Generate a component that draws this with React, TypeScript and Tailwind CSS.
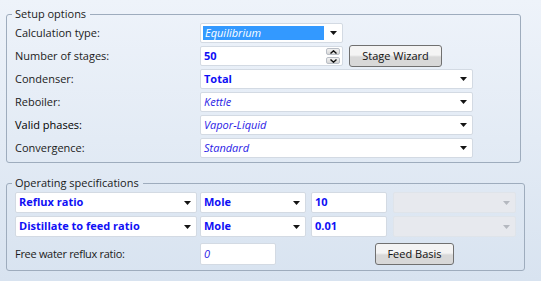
import type { ReactNode } from "react";

const font = { fontFamily: '"Open Sans", "Noto Sans", sans-serif' };

function Arrow({ disabled }: { disabled?: boolean }) {
  return (
    <svg width="7" height="4" viewBox="0 0 7 4" className="shrink-0">
      <path d="M0 0 H7 L3.5 4 Z" fill={disabled ? "#b4b8bf" : "#141414"} />
    </svg>
  );
}

function Select({
  value,
  width,
  bold,
  highlight,
  disabled,
}: {
  value?: string;
  width: string;
  bold?: boolean;
  highlight?: boolean;
  disabled?: boolean;
}) {
  return (
    <div
      className={`${width} h-full shrink-0 flex items-center rounded-[2px] border ${
        disabled ? "bg-[#e7e9ee] border-[#dfe4ea]" : "bg-white border-[#d3dae3]"
      } pr-[5px]`}
    >
      {highlight ? (
        <div className="flex-1 ml-[2px] mr-[6px] h-[14px] bg-[#3399ff] flex items-center pl-[2px]">
          <span className="italic text-white">{value}</span>
        </div>
      ) : (
        <span
          className={`flex-1 pl-[3px] truncate ${
            bold ? "font-bold text-[#1010f5]" : "italic text-[#2a22e6]"
          }`}
        >
          {value}
        </span>
      )}
      <Arrow disabled={disabled} />
    </div>
  );
}

function TextBox({ value, width, bold }: { value: string; width: string; bold?: boolean }) {
  return (
    <div
      className={`${width} h-full shrink-0 flex items-center rounded-[2px] border border-[#d3dae3] bg-white pl-[3px]`}
    >
      <span className={bold ? "font-bold text-[#1010f5]" : "italic text-[#2a22e6]"}>{value}</span>
    </div>
  );
}

function Button({ label, width }: { label: string; width: string }) {
  return (
    <div
      className={`${width} h-[22px] shrink-0 flex items-center justify-center rounded-[3px] border border-[#707070] bg-linear-to-b from-[#f4f4f4] from-45% to-[#d8d8d8] to-55% text-[#111]`}
    >
      {label}
    </div>
  );
}

function Spinner() {
  return (
    <div className="flex flex-col gap-[2px] mr-[1px]">
      {[0, 1].map((i) => (
        <div
          key={i}
          className="w-[14px] h-[7px] rounded-[2px] border border-[#b9bec6] bg-linear-to-b from-[#f2f2f2] to-[#d6d6d6] flex items-center justify-center"
        >
          <svg width="7" height="4" viewBox="0 0 7 4">
            <path
              d={i === 0 ? "M0.5 3.5 L3.5 0.8 L6.5 3.5" : "M0.5 0.5 L3.5 3.2 L6.5 0.5"}
              fill="none"
              stroke="#111"
              strokeWidth="1.4"
            />
          </svg>
        </div>
      ))}
    </div>
  );
}

function Row({ label, children, labelClass }: { label: string; children: ReactNode; labelClass?: string }) {
  return (
    <div className="flex items-center h-5">
      <div className={`w-[185px] shrink-0 ${labelClass ?? "text-[#1b1b1b]"}`}>{label}</div>
      {children}
    </div>
  );
}

function Group({ title, children, className }: { title: string; children: ReactNode; className?: string }) {
  return (
    <fieldset
      className={`ml-[6px] w-[515px] rounded-[3px] border border-[#9eacbd] px-[5px] ${className ?? ""}`}
    >
      <legend className="px-[3px] pr-[4px] leading-[14px] text-[#1b1b1b]">{title}</legend>
      {children}
    </fieldset>
  );
}

export default function App() {
  return (
    <div
      className="w-[541px] h-[281px] overflow-hidden bg-linear-to-b from-[#eef3fa] to-[#d8e3f0] text-[11px] pt-[7px]"
      style={font}
    >
      <Group title="Setup options" className="pt-[2px] pb-[4px]">
        <div className="px-[3px] flex flex-col gap-[3px]">
          <Row label="Calculation type:">
            <Select value="Equilibrium" width="w-[143px]" highlight />
          </Row>
          <Row label="Number of stages:">
            <div className="w-[143px] h-full shrink-0 flex items-center rounded-[2px] border border-[#d3dae3] bg-white pl-[3px] pr-px">
              <span className="flex-1 font-bold text-[#1010f5]">50</span>
              <Spinner />
            </div>
            <div className="ml-[6px] -my-px">
              <Button label="Stage Wizard" width="w-[93px]" />
            </div>
          </Row>
          <Row label="Condenser:">
            <Select value="Total" width="w-[273px]" bold />
          </Row>
          <Row label="Reboiler:">
            <Select value="Kettle" width="w-[273px]" />
          </Row>
          <Row label="Valid phases:" labelClass="text-black">
            <Select value="Vapor-Liquid" width="w-[273px]" />
          </Row>
          <Row label="Convergence:">
            <Select value="Standard" width="w-[273px]" />
          </Row>
        </div>
      </Group>

      <Group title="Operating specifications" className="mt-[13px] pt-[2px] pb-[5px]">
        <div className="px-[3px] flex flex-col">
          <div className="flex items-center h-[21px]">
            <Select value="Reflux ratio" width="w-[182px]" bold />
            <div className="ml-[3px] h-full">
              <Select value="Mole" width="w-[106px]" bold />
            </div>
            <div className="ml-[5px] h-full">
              <TextBox value="10" width="w-[76px]" bold />
            </div>
            <div className="ml-[6px] h-full">
              <Select width="w-[123px]" disabled />
            </div>
          </div>
          <div className="flex items-center h-[21px] mt-[3px]">
            <Select value="Distillate to feed ratio" width="w-[182px]" bold />
            <div className="ml-[3px] h-full">
              <Select value="Mole" width="w-[106px]" bold />
            </div>
            <div className="ml-[5px] h-full">
              <TextBox value="0.01" width="w-[76px]" bold />
            </div>
            <div className="ml-[6px] h-full">
              <Select width="w-[123px]" disabled />
            </div>
          </div>
          <div className="flex items-center h-[22px] mt-[6px]">
            <div className="w-[185px] shrink-0 text-[#1b1b1b] tracking-[-0.3px]">Free water reflux ratio:</div>
            <div className="h-full">
              <TextBox value="0" width="w-[76px]" />
            </div>
            <div className="ml-[99px]">
              <Button label="Feed Basis" width="w-[79px]" />
            </div>
          </div>
        </div>
      </Group>
    </div>
  );
}
